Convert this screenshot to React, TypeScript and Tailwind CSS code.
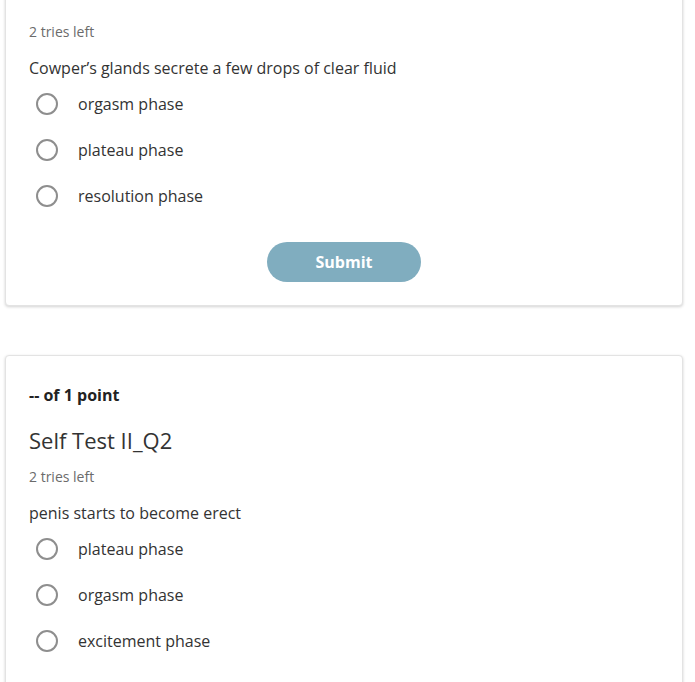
import React from "react";

function Radio({ label }: { label: string }) {
  return (
    <div className="flex h-[46px] items-center">
      <span className="ml-[7px] box-border h-[22px] w-[22px] rounded-full border-2 border-[#8e8e8e] bg-white" />
      <span className="ml-[20px] text-[16px] leading-6 text-[#333333]">{label}</span>
    </div>
  );
}

export default function App() {
  return (
    <div
      className="min-h-[682px] overflow-hidden bg-white pl-[5px] pr-[12px]"
      style={{ fontFamily: '"Open Sans", "Noto Sans", sans-serif' }}
    >
      <div className="-mt-[10px] w-[678px] rounded-[4px] border border-[#e3e3e3] bg-white px-[23px] pt-[30px] pb-[23px] shadow-[0_1px_3px_rgba(0,0,0,0.18)]">
        <div className="flex h-5 items-center text-[14px] text-[#6b6b6b]">2 tries left</div>
        <div className="mt-[15px] flex h-6 items-center text-[16px] text-[#333333]">
          Cowper’s glands secrete a few drops of clear fluid
        </div>
        <div className="mt-[1px]">
          <Radio label="orgasm phase" />
          <Radio label="plateau phase" />
          <Radio label="resolution phase" />
        </div>
        <div className="mt-[23px] flex justify-center">
          <button className="h-10 w-[154px] rounded-full bg-[#80adbf] text-[16px] font-bold text-white">
            Submit
          </button>
        </div>
      </div>

      <div className="mt-[49px] w-[678px] rounded-[4px] border border-[#e3e3e3] bg-white px-[23px] pt-[27px] pb-[30px] shadow-[0_1px_3px_rgba(0,0,0,0.18)]">
        <div className="flex h-6 items-center text-[16px] font-bold text-[#222222]">-- of 1 point</div>
        <div className="mt-[18px] flex h-[30px] items-center text-[22px] text-[#333333]">Self Test II_Q2</div>
        <div className="mt-[11px] flex h-5 items-center text-[14px] text-[#6b6b6b]">2 tries left</div>
        <div className="mt-[15px] flex h-6 items-center text-[16px] text-[#333333]">penis starts to become erect</div>
        <div className="mt-[1px]">
          <Radio label="plateau phase" />
          <Radio label="orgasm phase" />
          <Radio label="excitement phase" />
        </div>
      </div>
    </div>
  );
}
